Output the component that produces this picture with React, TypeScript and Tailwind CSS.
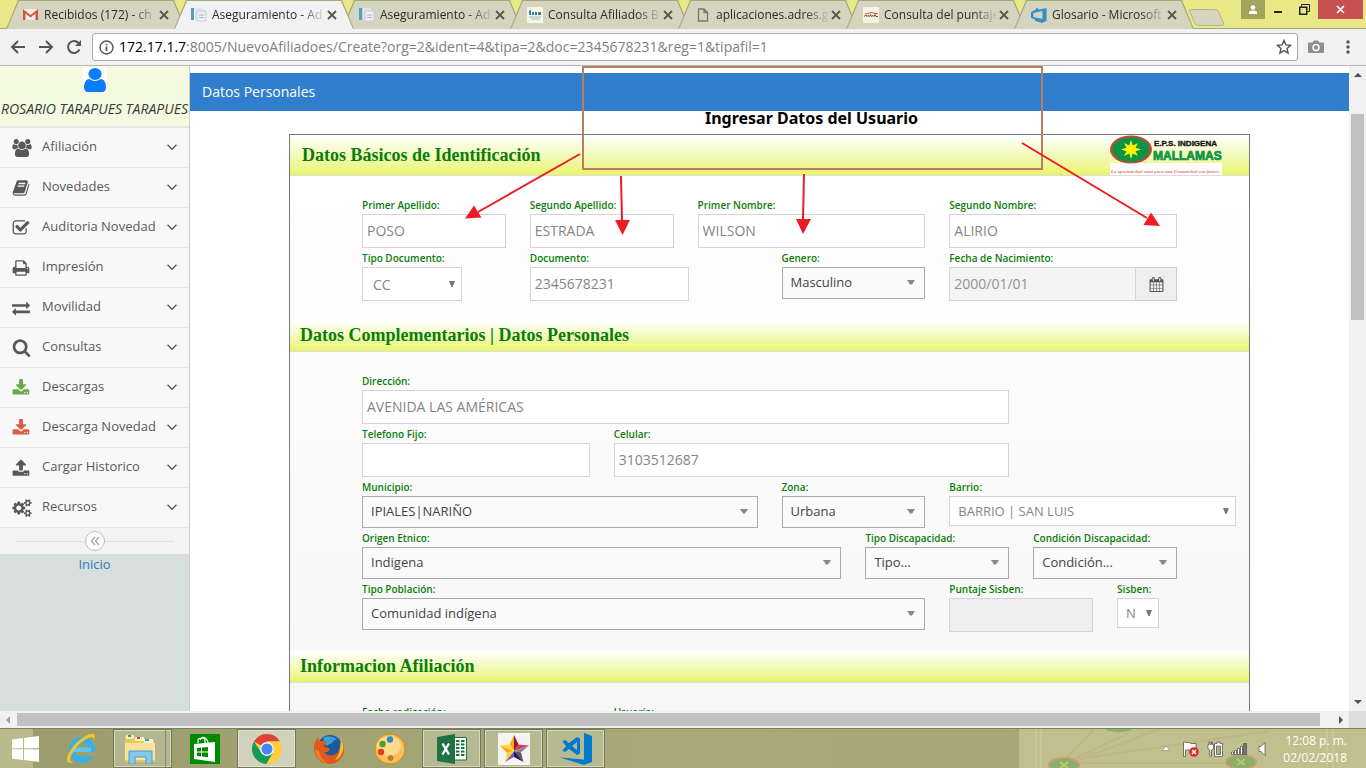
import type { ReactNode } from "react";

const PATHS = {
  users:
    "M593 896q-162 5-265 128h-134q-82 0-138-40.5t-56-118.5q0-353 124-353 6 0 43.5 21t97.5 42.5 119 21.5q67 0 133-23-5 37-5 66 0 139 81 256zm1071 637q0 120-73 189.5t-194 69.5h-874q-121 0-194-69.5t-73-189.5q0-53 3.5-103.5t14-109 26.5-108.5 43-97.5 62-81 85.5-53.5 111.5-20q10 0 43 21.5t73 48 107 48 135 21.5 135-21.5 107-48 73-48 43-21.5q61 0 111.5 20t85.5 53.5 62 81 43 97.5 26.5 108.5 14 109 3.5 103.5zm-1024-1277q0 106-75 181t-181 75-181-75-75-181 75-181 181-75 181 75 75 181zm704 384q0 159-112.5 271.5t-271.5 112.5-271.5-112.5-112.5-271.5 112.5-271.5 271.5-112.5 271.5 112.5 112.5 271.5zm576 225q0 78-56 118.5t-138 40.5h-134q-103-123-265-128 81-117 81-256 0-29-5-66 66 23 133 23 59 0 119-21.5t97.5-42.5 43.5-21q124 0 124 353zm-128-609q0 106-75 181t-181 75-181-75-75-181 75-181 181-75 181 75 75 181z",
  book:
    "M1703 478q40 57 18 129l-275 906q-19 64-76.5 107.5t-122.5 43.5h-923q-77 0-148.5-53.5t-99.5-131.5q-24-67-2-127 0-4 3-27t4-37q1-8-3-21.5t-3-19.5q2-11 8-21t16.5-23.5 16.5-23.5q23-38 45-91.5t30-91.5q3-10 .5-30t-.5-28q3-11 17-28t17-23q21-36 42-92t25-90q1-9-2.5-32t.5-28q4-13 22-30.5t22-22.5q19-26 42.5-84.5t27.5-96.5q1-8-3-25.5t-2-26.5q2-8 9-18t18-23 17-21q8-12 16.5-30.5t15-35 16-36 19.5-32 26.5-23.5 36-11.5 47.5 5.5l-1 3q38-9 51-9h761q74 0 114 56t18 130l-274 906q-36 119-71.5 153.5t-128.5 34.5h-869q-27 0-38 15-11 16-1 43 24 70 144 70h923q29 0 56-15.5t35-41.5l300-987q7-22 5-57 38 15 59 43zm-1064 2q-4 13 2 22.5t20 9.5h608q13 0 25.5-9.5t16.5-22.5l21-64q4-13-2-22.5t-20-9.5h-608q-13 0-25.5 9.5t-16.5 22.5zm-83 256q-4 13 2 22.5t20 9.5h608q13 0 25.5-9.5t16.5-22.5l21-64q4-13-2-22.5t-20-9.5h-608q-13 0-25.5 9.5t-16.5 22.5z",
  check:
    "M1472 930v318q0 119-84.5 203.5t-203.5 84.5h-832q-119 0-203.5-84.5t-84.5-203.5v-832q0-119 84.5-203.5t203.5-84.5h832q63 0 117 25 15 7 18 23 3 17-9 29l-49 49q-10 10-23 10-3 0-9-2-23-6-45-6h-832q-66 0-113 47t-47 113v832q0 66 47 113t113 47h832q66 0 113-47t47-113v-254q0-13 9-22l64-64q10-10 23-10 6 0 12 3 20 8 20 29zm231-489l-814 814q-24 24-57 24t-57-24l-430-430q-24-24-24-57t24-57l110-110q24-24 57-24t57 24l263 263 647-647q24-24 57-24t57 24l110 110q24 24 24 57t-24 57z",
  print:
    "M448 1536h896v-256h-896v256zm0-640h896v-384h-160q-40 0-68-28t-28-68v-160h-640v640zm1152 64q0-26-19-45t-45-19-45 19-19 45 19 45 45 19 45-19 19-45zm128 0v416q0 13-9.5 22.5t-22.5 9.5h-224v160q0 40-28 68t-68 28h-960q-40 0-68-28t-28-68v-160h-224q-13 0-22.5-9.5t-9.5-22.5v-416q0-79 56.5-135.5t135.5-56.5h64v-544q0-40 28-68t68-28h672q40 0 88 20t76 48l152 152q28 28 48 76t20 88v256h64q79 0 135.5 56.5t56.5 135.5z",
  exchange:
    "M1792 1184v192q0 13-9.5 22.5t-22.5 9.5h-1376v192q0 13-9.5 22.5t-22.5 9.5q-12 0-24-10l-319-320q-9-9-9-22 0-14 9-23l320-320q9-9 23-9 13 0 22.5 9.5t9.5 22.5v192h1376q13 0 22.5 9.5t9.5 22.5zm0-544q0 14-9 23l-320 320q-9 9-23 9-13 0-22.5-9.5t-9.5-22.5v-192h-1376q-13 0-22.5-9.5t-9.5-22.5v-192q0-13 9.5-22.5t22.5-9.5h1376v-192q0-14 9-23t23-9q12 0 24 10l319 319q9 9 9 23z",
  search:
    "M1216 832q0-185-131.5-316.5t-316.5-131.5-316.5 131.5-131.5 316.5 131.5 316.5 316.5 131.5 316.5-131.5 131.5-316.5zm512 832q0 52-38 90t-90 38q-54 0-90-38l-343-342q-179 124-399 124-143 0-273.5-55.5t-225-150-150-225-55.5-273.5 55.5-273.5 150-225 225-150 273.5-55.5 273.5 55.5 225 150 150 225 55.5 273.5q0 220-124 399l343 343q37 37 37 90z",
  download:
    "M1344 1344q0-26-19-45t-45-19-45 19-19 45 19 45 45 19 45-19 19-45zm256 0q0-26-19-45t-45-19-45 19-19 45 19 45 45 19 45-19 19-45zm128-224v320q0 40-28 68t-68 28h-1472q-40 0-68-28t-28-68v-320q0-40 28-68t68-28h465l135 136q58 56 136 56t136-56l136-136h464q40 0 68 28t28 68zm-325-569q17 41-14 70l-448 448q-18 19-45 19t-45-19l-448-448q-31-29-14-70 17-39 59-39h256v-448q0-26 19-45t45-19h256q26 0 45 19t19 45v448h256q42 0 59 39z",
  upload:
    "M1344 1472q0-26-19-45t-45-19-45 19-19 45 19 45 45 19 45-19 19-45zm256 0q0-26-19-45t-45-19-45 19-19 45 19 45 45 19 45-19 19-45zm128-224v320q0 40-28 68t-68 28h-1472q-40 0-68-28t-28-68v-320q0-40 28-68t68-28h427q21 56 70.5 92t110.5 36h256q61 0 110.5-36t70.5-92h427q40 0 68 28t28 68zm-325-648q-17 40-59 40h-256v448q0 26-19 45t-45 19h-256q-26 0-45-19t-19-45v-448h-256q-42 0-59-40-17-39 14-69l448-448q18-19 45-19t45 19l448 448q31 30 14 69z",
  cogs:
    "M896 896q0-106-75-181t-181-75-181 75-75 181 75 181 181 75 181-75 75-181zm768 512q0-52-38-90t-90-38-90 38-38 90q0 53 37.5 90.5t90.5 37.5 90.5-37.5 37.5-90.5zm0-1024q0-52-38-90t-90-38-90 38-38 90q0 53 37.5 90.5t90.5 37.5 90.5-37.5 37.5-90.5zm-384 421v185q0 10-7 19.5t-16 10.5l-155 24q-11 35-32 76 34 48 90 115 7 11 7 20 0 12-7 19-23 30-82.5 89.5t-78.5 59.5q-11 0-21-7l-115-90q-37 19-77 31-11 108-23 155-7 24-30 24h-186q-11 0-20-7.5t-10-17.500l-23-153q-34-10-75-31l-118 89q-7 7-20 7-11 0-21-8-144-133-144-160 0-9 7-19 10-14 41-53t47-61q-23-44-35-82l-152-24q-10-1-17-9.5t-7-19.5v-185q0-10 7-19.5t16-10.5l155-24q11-35 32-76-34-48-90-115-7-11-7-20 0-12 7-20 22-30 82-89t79-59q11 0 21 7l115 90q34-18 77-32 11-108 23-154 7-24 30-24h186q11 0 20 7.5t10 17.5l23 153q34 10 75 31l118-89q8-7 20-7 11 0 21 8 144 133 144 160 0 9-7 19-12 16-42 54t-45 60q23 48 34 82l152 23q10 2 17 10.5t7 19.5zm640 533v140q0 16-149 31-12 27-30 52 51 113 51 138 0 4-4 7-122 71-124 71-8 0-46-47t-52-68q-20 2-30 2t-30-2q-14 21-52 68t-46 47q-2 0-124-71-4-3-4-7 0-25 51-138-18-25-30-52-149-15-149-31v-140q0-16 149-31 13-29 30-52-51-113-51-138 0-4 4-7 4-2 35-20t59-34 30-16q8 0 46 46.5t52 67.5q20-2 30-2t30 2q51-71 92-112l6-2q4 0 124 70 4 3 4 7 0 25-51 138 17 23 30 52 149 15 149 31zm0-1024v140q0 16-149 31-12 27-30 52 51 113 51 138 0 4-4 7-122 71-124 71-8 0-46-47t-52-68q-20 2-30 2t-30-2q-14 21-52 68t-46 47q-2 0-124-71-4-3-4-7 0-25 51-138-18-25-30-52-149-15-149-31v-140q0-16 149-31 13-29 30-52-51-113-51-138 0-4 4-7 4-2 35-20t59-34 30-16q8 0 46 46.5t52 67.5q20-2 30-2t30 2q51-71 92-112l6-2q4 0 124 70 4 3 4 7 0 25-51 138 17 23 30 52 149 15 149 31z",
  user:
    "M1536 1399q0 109-62.5 187t-150.5 78h-854q-88 0-150.5-78t-62.5-187q0-85 8.5-160.5t31.5-152 58.5-131 94-89 134.5-34.5q131 128 313 128t313-128q76 0 134.5 34.5t94 89 58.5 131 31.5 152 8.5 160.5zm-256-887q0 159-112.5 271.5t-271.5 112.5-271.5-112.5-112.5-271.5 112.5-271.5 271.5-112.5 271.5 112.5 112.5 271.5z",
  calendar:
    "M192 1664h288v-288h-288v288zm352 0h320v-288h-320v288zm-352-352h288v-320h-288v320zm352 0h320v-320h-320v320zm-352-384h288v-288h-288v288zm736 736h320v-288h-320v288zm-384-736h320v-288h-320v288zm768 736h288v-288h-288v288zm-384-352h320v-320h-320v320zm-352-864v-288q0-13-9.5-22.5t-22.5-9.5h-64q-13 0-22.5 9.5t-9.5 22.5v288q0 13 9.5 22.5t22.5 9.5h64q13 0 22.5-9.5t9.5-22.5zm736 864h288v-320h-288v320zm-384-384h320v-288h-320v288zm384 0h288v-288h-288v288zm32-480v-288q0-13-9.5-22.5t-22.5-9.5h-64q-13 0-22.5 9.5t-9.5 22.5v288q0 13 9.5 22.5t22.5 9.5h64q13 0 22.5-9.5t9.5-22.5zm384-64v1280q0 52-38 90t-90 38h-1408q-52 0-90-38t-38-90v-1280q0-52 38-90t90-38h128v-96q0-66 47-113t113-47h64q66 0 113 47t47 113v96h384v-96q0-66 47-113t113-47h64q66 0 113 47t47 113v96h128q52 0 90 38t38 90z",
};

function Glyph({ name, className, wide }: { name: keyof typeof PATHS; className: string; wide?: boolean }) {
  return (
    <svg viewBox={wide ? "0 0 1920 1792" : "0 0 1792 1792"} className={className} fill="currentColor" aria-hidden="true">
      <path d={PATHS[name]} />
    </svg>
  );
}

/* ---------- Browser chrome ---------- */

function MailIcon() {
  return (
    <svg viewBox="0 0 15 13" className="h-[13px] w-[15px]">
      <path d="M0 1h15v11H0z" fill="#f2ece8" />
      <path d="M0 12V1l7.500 6L15 1v11h-2.500V5.500L7.500 9.500l-5-4V12z" fill="#d4553f" />
    </svg>
  );
}

function SheetsIcon() {
  return (
    <svg viewBox="0 0 16 16" className="size-4">
      <path d="M0 1h3v12H0z" fill="#4f9fc0" />
      <path d="M4 1h7l2 2v10H4z" fill="#dfe5ea" />
      <path d="M6 4h9v10H6z" fill="#eceff2" stroke="#c0c9d2" strokeWidth=".8" />
      <path d="M8 8h5M8 10.500h5" stroke="#aeb9c4" />
    </svg>
  );
}

function AdresIcon() {
  return (
    <svg viewBox="0 0 16 16" className="size-4">
      <path d="M0 0h16v16H0z" fill="#f7f5e6" />
      <path d="M2 8V4l2-1.500V8zM5 8V5h2v3zM8 8V5h2v3zM11 8V5h3v3z" fill="#2e84a8" />
      <path d="M2 10h12M4 12h9" stroke="#8fa9b3" strokeWidth=".8" />
    </svg>
  );
}

function PageIcon() {
  return (
    <svg viewBox="0 0 16 16" className="size-4" fill="none" stroke="#75756a" strokeWidth="1.300">
      <path d="M3.500 2h5.500l3.500 3.500V14h-9zM9 2v3.500h3.500" />
    </svg>
  );
}

function SisbenIcon() {
  return (
    <svg viewBox="0 0 16 16" className="size-4">
      <path d="M0 0h16v16H0z" fill="#f7f3e4" />
      <path d="M2 7q6-3 13 0" stroke="#d9523c" fill="none" />
      <path d="M1 9.500l2-1.500 1 1.500 1-1 1.500 1 1-2 1 2 1.500-1 1 1 1-2 1 2h2" stroke="#4a3c36" strokeWidth=".9" fill="none" />
    </svg>
  );
}

function AzureIcon() {
  return (
    <svg viewBox="0 0 16 16" className="size-4" fill="#2f8fca">
      <path fillRule="evenodd" d="M0 5l5-2.500V.5L8 2.500l7.500-1.500v13L11 16l-6-2H4v-1.500L0 11zM2.500 6v4l9 2V4z" />
    </svg>
  );
}

const tabs: { title: string; icon: ReactNode; active?: boolean }[] = [
  { title: "Recibidos (172) - ch", icon: <MailIcon /> },
  { title: "Aseguramiento - Ad", icon: <SheetsIcon />, active: true },
  { title: "Aseguramiento - Ad", icon: <SheetsIcon /> },
  { title: "Consulta Afiliados B", icon: <AdresIcon /> },
  { title: "aplicaciones.adres.g", icon: <PageIcon /> },
  { title: "Consulta del puntaje", icon: <SisbenIcon /> },
  { title: "Glosario - Microsoft", icon: <AzureIcon /> },
];

function TabStrip() {
  return (
    <div className="flex h-7 shrink-0 bg-[#e8e886] pl-[6px]">
      <div role="tablist" className="flex min-w-0">
        {tabs.map((t, i) => (
          <div key={i} role="tab" aria-selected={!!t.active} className={`relative flex h-[29px] w-[180px] -mr-3 items-center ${t.active ? "z-10" : ""}`}>
            <span className="absolute inset-0 bg-[#a5a57e] [clip-path:polygon(0_100%,12px_0,calc(100%-12px)_0,100%_100%)]" />
            <span
              className={`absolute inset-0 [clip-path:polygon(1px_100%,13px_1px,calc(100%-13px)_1px,calc(100%-1px)_100%)] ${
                t.active ? "bg-[#f2f2f2]" : "bg-[#d5d5bf]"
              }`}
            />
            <span className="relative ml-4 flex w-[17px] justify-center">{t.icon}</span>
            <span className="relative ml-[5px] w-[114px] whitespace-nowrap text-xs text-[#2b2b26] [mask-image:linear-gradient(to_right,#000_78%,transparent)]">
              {t.title}
            </span>
            <button aria-label="Cerrar" className="relative ml-px">
              <svg viewBox="0 0 10 10" className="size-[10px]" stroke="#55554d" strokeWidth="1.800">
                <path d="M1 1l8 8M9 1l-8 8" />
              </svg>
            </button>
          </div>
        ))}
      </div>
      <button aria-label="Nueva pestaña" className="ml-[7px] mt-[7px]">
        <svg viewBox="0 0 36 17" className="h-[17px] w-9">
          <path d="M2 .5h24.500q2 0 3 2l5 11.500q1 2.500-1 2.500H9q-2 0-3-2L1 3Q0 .5 2 .5z" fill="#d5d5bf" stroke="#b4b48a" />
        </svg>
      </button>
      <div className="ml-auto flex items-start pr-[3px]">
        <button aria-label="Perfil" className="flex h-[19px] w-6 items-center justify-center bg-[#a3a35c]">
          <svg viewBox="0 0 10 10" className="size-[10px]" fill="#fff">
            <circle cx="5" cy="2.500" r="2.300" />
            <path d="M1 9V7.500Q1 5.600 5 5.600T9 7.500V9z" />
          </svg>
        </button>
        <button aria-label="Minimizar" className="flex h-[19px] w-[26px] items-end justify-center pb-[6px]">
          <svg viewBox="0 0 8 2" className="h-[2px] w-2" fill="#222">
            <path d="M0 0h8v2H0z" />
          </svg>
        </button>
        <button aria-label="Restaurar" className="flex h-[19px] w-[27px] items-center justify-center">
          <svg viewBox="0 0 11 11" className="size-[11px]" fill="none" stroke="#222">
            <path d="M2.500 2.500v-2h8v7h-2" />
            <path d="M.75 3.250h7v7h-7z" strokeWidth="1.500" />
          </svg>
        </button>
        <button aria-label="Cerrar ventana" className="flex h-[19px] w-[45px] items-center justify-center bg-[#c75050]">
          <svg viewBox="0 0 9 9" className="size-[9px]" stroke="#fff" strokeWidth="1.700">
            <path d="M1 1l7 7M8 1L1 8" />
          </svg>
        </button>
      </div>
    </div>
  );
}

function Toolbar() {
  return (
    <div className="flex h-[38px] shrink-0 items-center border-b border-t border-b-[#b6b4b6] border-t-[#a5a57e] bg-[#f2f2f2] pl-[10px] pr-4">
      <button aria-label="Atrás" className="mr-[12px]">
        <svg viewBox="0 0 16 16" className="size-4" fill="none" stroke="#555" strokeWidth="2">
          <path d="M15 8H2.500M8 2L2 8l6 6" />
        </svg>
      </button>
      <button aria-label="Adelante" className="mr-[12px]">
        <svg viewBox="0 0 16 16" className="size-4" fill="none" stroke="#555" strokeWidth="2">
          <path d="M1 8h12.500M8 2l6 6-6 6" />
        </svg>
      </button>
      <button aria-label="Recargar" className="mr-[10px]">
        <svg viewBox="0 0 16 16" className="size-4">
          <path d="M13.500 10.500A6 6 0 1 1 12.500 4" fill="none" stroke="#555" strokeWidth="2" />
          <path d="M15 1v6H9z" fill="#555" />
        </svg>
      </button>
      <div className="flex h-7 min-w-0 flex-1 items-center rounded-[3px] border border-[#a9a9a9] bg-white pl-[6px] pr-[5px]">
        <svg viewBox="0 0 15 15" className="size-[15px] shrink-0" fill="none" stroke="#555" strokeWidth="1.400">
          <circle cx="7.500" cy="7.500" r="6.500" />
          <path d="M7.500 6.500v4.500M7.500 3.700v1.500" strokeWidth="1.700" />
        </svg>
        <p className="ml-[5px] flex-1 truncate text-sm text-[#808080]">
          <span className="text-black">172.17.1.7</span>:8005/NuevoAfiliadoes/Create?org=2&amp;ident=4&amp;tipa=2&amp;doc=2345678231&amp;reg=1&amp;tipafil=1
        </p>
        <svg viewBox="0 0 16 16" className="size-4 shrink-0" fill="none" stroke="#555" strokeWidth="1.400">
          <path d="M8 1.500l1.900 4.400 4.700.4-3.600 3.100 1.100 4.700L8 11.600l-4.100 2.500L5 9.400 1.400 6.300l4.700-.4z" />
        </svg>
      </div>
      <button aria-label="Captura" className="ml-[10px]">
        <svg viewBox="0 0 16 14" className="h-[14px] w-4">
          <path d="M1 2.500h3.500L6 .5h4l1.500 2H15q1 0 1 1V12q0 1-1 1H1q-1 0-1-1V3.500q0-1 1-1z" fill="#8f8f8f" />
          <circle cx="8" cy="7.500" r="3" fill="#8f8f8f" stroke="#fff" strokeWidth="1.500" />
        </svg>
      </button>
      <button aria-label="Menú" className="ml-[22px]">
        <svg viewBox="0 0 4 14" className="h-[14px] w-1" fill="#555">
          <circle cx="2" cy="2" r="1.700" />
          <circle cx="2" cy="7" r="1.700" />
          <circle cx="2" cy="12" r="1.700" />
        </svg>
      </button>
    </div>
  );
}

/* ---------- Sidebar ---------- */

const menu: { label: string; icon: ReactNode }[] = [
  { label: "Afiliación", icon: <Glyph name="users" wide className="h-[18px] w-5" /> },
  { label: "Novedades", icon: <Glyph name="book" className="size-[18px]" /> },
  { label: "Auditoria Novedad", icon: <Glyph name="check" className="size-[18px]" /> },
  { label: "Impresión", icon: <Glyph name="print" className="size-[18px]" /> },
  { label: "Movilidad", icon: <Glyph name="exchange" className="size-[18px]" /> },
  { label: "Consultas", icon: <Glyph name="search" className="size-[19px]" /> },
  { label: "Descargas", icon: <Glyph name="download" className="size-[18px] text-[#69aa46]" /> },
  { label: "Descarga Novedad", icon: <Glyph name="download" className="size-[18px] text-[#dd5a43]" /> },
  { label: "Cargar Historico", icon: <Glyph name="upload" className="size-[18px]" /> },
  { label: "Recursos", icon: <Glyph name="cogs" wide className="h-[18px] w-5" /> },
];

function Sidebar() {
  return (
    <aside className="flex w-[190px] shrink-0 flex-col border-r border-[#ccc] bg-[#d6dfdc]">
      <div className="flex h-[62px] flex-col items-center border-b-2 border-[#e5e5e5] bg-[#f3fadf]">
        <div className="mt-px flex h-[25px] w-6 items-center justify-center bg-white">
          <svg viewBox="256 128 1280 1536" preserveAspectRatio="none" className="h-6 w-[22px]" fill="#0a7cff">
            <path d={PATHS.user} />
          </svg>
        </div>
        <p className="mt-[7px] whitespace-nowrap text-sm italic leading-5 text-[#393939]">ROSARIO TARAPUES TARAPUES</p>
      </div>
      <nav>
        <ul>
          {menu.map((m) => (
            <li key={m.label} className="border-b border-[#e5e5e5] bg-[#f8f8f8]">
              <a href="#" className="flex h-[39px] items-center pl-3 pr-3 text-[#585858]">
                <span className="flex w-[30px] shrink-0">{m.icon}</span>
                <span className="flex-1 whitespace-nowrap pb-[2px] text-[13px]">{m.label}</span>
                <svg viewBox="0 0 10 8" className="h-2 w-[10px]" fill="none" stroke="#585858" strokeWidth="1.400">
                  <path d="M.5.7L5 5.200 9.500.7" />
                </svg>
              </a>
            </li>
          ))}
        </ul>
      </nav>
      <div className="flex h-[26px] items-center bg-[#f3f3f3] px-[15px]">
        <span className="h-px flex-1 bg-[#e0e0e0]" />
        <button aria-label="Contraer menú" className="flex size-5 items-center justify-center rounded-full border border-[#bbb] bg-white">
          <svg viewBox="0 0 10 10" className="size-[10px]" fill="none" stroke="#aaa" strokeWidth="1.400">
            <path d="M5 1L1.500 5 5 9M9 1L5.500 5 9 9" />
          </svg>
        </button>
        <span className="h-px flex-1 bg-[#e0e0e0]" />
      </div>
      <a href="#" className="text-center text-[13px] leading-5 text-[#337ab7]">
        Inicio
      </a>
    </aside>
  );
}

/* ---------- Form ---------- */

function Field({ id, label, className, children }: { id: string; label: string; className: string; children: ReactNode }) {
  return (
    <div className={className}>
      <label htmlFor={id} className="block h-[19px] whitespace-nowrap text-[10px] font-semibold leading-5 text-[#0a7d0a]">
        {label}
      </label>
      {children}
    </div>
  );
}

function TextField({ id, label, value, className, inputClass = "w-full" }: { id: string; label: string; value: string; className: string; inputClass?: string }) {
  return (
    <Field id={id} label={label} className={className}>
      <input id={id} defaultValue={value} className={`block h-[34px] border border-[#d5d5d5] bg-white px-1 pb-[2px] text-sm text-[#858585] ${inputClass}`} />
    </Field>
  );
}

function ChosenSelect({ id, label, value, className }: { id: string; label: string; value: string; className: string }) {
  return (
    <Field id={id} label={label} className={className}>
      <div className="relative">
        <select id={id} className="block h-8 w-full appearance-none border border-[#aaa] bg-[#fafafa] pl-2 pr-6 text-[13px] text-[#444]">
          <option>{value}</option>
        </select>
        <svg viewBox="0 0 8 5" className="pointer-events-none absolute right-[10px] top-[13px] h-[5px] w-2" fill="#888">
          <path d="M0 0h8L5 4.500H3z" />
        </svg>
      </div>
    </Field>
  );
}

function PlainSelect({ id, label, value, className, boxClass, selectClass }: { id: string; label: string; value: string; className: string; boxClass: string; selectClass: string }) {
  return (
    <Field id={id} label={label} className={className}>
      <div className={`relative ${boxClass}`}>
        <select id={id} className={`block w-full appearance-none border border-[#d5d5d5] bg-white pt-[2px] text-[#858585] ${selectClass}`}>
          <option>{value}</option>
        </select>
        <svg viewBox="0 0 6 7" className="pointer-events-none absolute inset-y-0 right-[7px] my-auto h-[7px] w-[6px]" fill="#777">
          <path d="M0 0h6L3.600 6H2.400z" />
        </svg>
      </div>
    </Field>
  );
}

function SectionTitle({ children }: { children: ReactNode }) {
  return (
    <h3 className="flex h-8 items-center border-b border-[#ddd] bg-linear-to-b from-white to-[#e9f46a] px-[10px] pb-[2px] font-['Liberation_Serif',serif] text-lg font-bold text-[#0a7d0a]">
      {children}
    </h3>
  );
}

function BrandLogo() {
  return (
    <svg viewBox="0 0 112 40" className="h-10 w-28 shrink-0">
      <path d="M0 28h112v12H0z" fill="#fff" />
      <ellipse cx="21" cy="14.500" rx="21" ry="14" fill="#c8463a" />
      <ellipse cx="21" cy="14.500" rx="18.500" ry="12.300" fill="#0b9444" />
      <path d="M21 5l1.800 5.500L28 8l-2.500 4.800L31 14.500l-5.500 1.700L28 21l-5.200-2.500L21 24l-1.800-5.500L14 21l2.500-4.800L11 14.500l5.500-1.700L14 8l5.200 2.500z" fill="#fff200" />
      <text x="44" y="11" fontFamily="'Liberation Sans',sans-serif" fontWeight="bold" fontSize="8" fill="#1a1a1a" stroke="#1a1a1a" strokeWidth=".4">
        E.P.S. INDIGENA
      </text>
      <text x="43" y="25" fontFamily="'Liberation Sans',sans-serif" fontWeight="bold" fontSize="12" fill="#0b9444" stroke="#0b9444" strokeWidth=".7">
        MALLAMAS
      </text>
      <text x="1" y="38" fontFamily="'Liberation Serif',serif" fontStyle="italic" fontSize="5" fill="#d0342c">
        La oportunidad sana para una Comunidad con futuro
      </text>
    </svg>
  );
}

const GRID = "grid grid-cols-10 gap-x-6 px-[72px] pt-[19px] pb-[19px]";

function Form() {
  return (
    <form className="border border-[#777] bg-linear-to-b from-white to-[#f6f6f6]">
      <div className="flex h-[41px] items-center justify-between border-b border-[#ddd] bg-linear-to-b from-white to-[#e9f46a] pl-3 pr-[27px]">
        <h3 className="font-['Liberation_Serif',serif] text-lg font-bold text-[#0a7d0a]">Datos Básicos de Identificación</h3>
        <BrandLogo />
      </div>
      <div className={GRID}>
        <TextField id="ape1" label="Primer Apellido:" value="POSO" className="col-span-2" />
        <TextField id="ape2" label="Segundo Apellido:" value="ESTRADA" className="col-span-2" />
        <TextField id="nom1" label="Primer Nombre:" value="WILSON" className="col-span-3" />
        <TextField id="nom2" label="Segundo Nombre:" value="ALIRIO" className="col-span-3" />
        <PlainSelect id="tdoc" label="Tipo Documento:" value="CC" className="col-span-2" boxClass="w-[100px]" selectClass="h-[34px] pl-[10px] text-sm" />
        <TextField id="doc" label="Documento:" value="2345678231" className="col-span-3" inputClass="w-[159px]" />
        <ChosenSelect id="gen" label="Genero:" value="Masculino" className="col-span-2" />
        <Field id="fnac" label="Fecha de Nacimiento:" className="col-span-3">
          <div className="flex">
            <input id="fnac" readOnly defaultValue="2000/01/01" className="h-[34px] min-w-0 flex-1 border border-[#d5d5d5] bg-[#f4f4f4] px-1 pb-[2px] text-sm text-[#939192]" />
            <button type="button" aria-label="Abrir calendario" className="flex w-[41px] items-center justify-center border border-l-0 border-[#ccc] bg-[#eee] text-[#555]">
              <Glyph name="calendar" className="size-[15px]" />
            </button>
          </div>
        </Field>
      </div>

      <SectionTitle>Datos Complementarios | Datos Personales</SectionTitle>
      <div className={GRID}>
        <TextField id="dir" label="Dirección:" value="AVENIDA LAS AMÉRICAS" className="col-span-8" />
        <TextField id="tel" label="Telefono Fijo:" value="" className="col-span-3 col-start-1" />
        <TextField id="cel" label="Celular:" value="3103512687" className="col-span-5" />
        <ChosenSelect id="mun" label="Municipio:" value="IPIALES|NARIÑO" className="col-span-5 col-start-1" />
        <ChosenSelect id="zona" label="Zona:" value="Urbana" className="col-span-2" />
        <PlainSelect id="barrio" label="Barrio:" value="BARRIO | SAN LUIS" className="col-span-3" boxClass="w-[287px]" selectClass="h-[30px] pl-2 text-[13px]" />
        <ChosenSelect id="etnia" label="Origen Etnico:" value="Indigena" className="col-span-6" />
        <ChosenSelect id="tdis" label="Tipo Discapacidad:" value="Tipo..." className="col-span-2" />
        <ChosenSelect id="cdis" label="Condición Discapacidad:" value="Condición..." className="col-span-2" />
        <ChosenSelect id="tpob" label="Tipo Población:" value="Comunidad indígena" className="col-span-7" />
        <Field id="punt" label="Puntaje Sisben:" className="col-span-2">
          <input id="punt" disabled className="block h-[34px] w-full border border-[#d5d5d5] bg-[#eee] px-1 text-sm" />
        </Field>
        <PlainSelect id="sisben" label="Sisben:" value="N" className="col-span-1" boxClass="w-[42px]" selectClass="h-[30px] pl-2 text-[13px]" />
      </div>

      <SectionTitle>Informacion Afiliación</SectionTitle>
      <div className={GRID}>
        <TextField id="frad" label="Fecha radicación:" value="" className="col-span-3" />
        <TextField id="usr" label="Usuario:" value="" className="col-span-5" />
      </div>
    </form>
  );
}

function Annotations() {
  return (
    <svg viewBox="0 0 1159 645" className="pointer-events-none absolute left-0 top-0 h-[645px] w-[1159px]" aria-hidden="true">
      <path d="M393 1h459v102H393z" fill="none" stroke="#bb7c60" strokeWidth="2" />
      <g stroke="#ed1c24" strokeWidth="2">
        <path d="M390 88L288 146" />
        <path d="M431 110l1 45" />
        <path d="M614 108l-1 46" />
        <path d="M832 77l125 75" />
      </g>
      <g fill="#ed1c24">
        <path d="M275 152.500l9-13 7.500 12z" />
        <path d="M425 154h15l-7.500 15z" />
        <path d="M606 153h15l-8 15z" />
        <path d="M970 160l-16.500-1 7.500-12.500z" />
      </g>
    </svg>
  );
}

function VerticalScrollbar() {
  return (
    <div className="flex w-[17px] shrink-0 flex-col items-center bg-[#f1f1f1] py-[7px]">
      <svg viewBox="0 0 8 4" className="h-1 w-2" fill="#505050">
        <path d="M0 4l4-4 4 4z" />
      </svg>
      <div className="mt-[37px] h-[206px] w-[13px] bg-[#c1c1c1]" />
      <svg viewBox="0 0 8 4" className="mt-auto h-1 w-2" fill="#505050">
        <path d="M0 0h8L4 4z" />
      </svg>
    </div>
  );
}

function HorizontalScrollbar() {
  return (
    <div className="flex h-[17px] shrink-0 items-center bg-[#f1f1f1]">
      <svg viewBox="0 0 4 8" className="ml-[6px] mr-[7px] h-2 w-1" fill="#a3a3a3">
        <path d="M4 0v8L0 4z" />
      </svg>
      <div className="h-[13px] flex-1 bg-[#c1c1c1]" />
      <svg viewBox="0 0 4 8" className="ml-[19px] mr-[6px] h-2 w-1" fill="#505050">
        <path d="M0 0v8l4-4z" />
      </svg>
      <div className="h-full w-[17px] bg-[#dcdcdc]" />
    </div>
  );
}

/* ---------- Taskbar ---------- */

const framed = "border border-[#75785a] bg-[#c3c6a3]/60 shadow-[inset_0_0_0_1px_rgba(235,236,215,0.6)]";

function Taskbar() {
  return (
    <footer className="flex h-10 shrink-0 border-t border-[#7d7f58] bg-linear-to-r from-[#9a9c6e] via-[#a8aa78] to-[#a3a672]">
      <button aria-label="Inicio" className="flex w-[49px] items-center bg-[linear-gradient(to_right,#b9ba8c_33px,transparent_33px)] pl-3">
        <svg viewBox="0 0 27 26" className="h-[26px] w-[27px]" fill="#fff">
          <path d="M0 3.500L11 2v10.300H0zM12 1.900L27 0v12.300H12zM0 13.300h11V24L0 22.500zM12 13.300h15V26l-15-1.900z" />
        </svg>
      </button>
      <button aria-label="Internet Explorer" className="flex w-16 items-center justify-center">
        <svg viewBox="0 0 32 32" className="size-8">
          <circle cx="17" cy="17" r="10" fill="none" stroke="#35b1ea" strokeWidth="6" />
          <path d="M8 14.500h18v4.500H8z" fill="#5cc6f2" />
          <path d="M20 19h12v4.500H20z" fill="#9da071" />
          <path d="M6 30Q-1 30 4 20T19 4q10-6 11-1 0 2-1 4 0-4-6-2-8 4-13 11T5 27q0 2 4 1.500z" fill="#f7c526" />
        </svg>
      </button>
      <button aria-label="Explorador" className={`flex w-[59px] items-center pl-[10px] ${framed}`}>
        <svg viewBox="0 0 32 30" className="h-[30px] w-8">
          <path d="M1 2h9l1 2h8l1 2h9l2 3v19H1z" fill="#e7c85e" />
          <path d="M2 1h8v4H2z" fill="#f4e9b8" />
          <path d="M11 3h9v4h-9zM20 5h9v4h-9z" fill="#faf3d0" />
          <path d="M4 1h3v2H4z" fill="#39a845" />
          <path d="M13 3h3v2h-3z" fill="#d6402f" />
          <path d="M21 5h4v2h-4z" fill="#2f9ede" />
          <path d="M1 9h30v17H1z" fill="#f8e39a" />
          <path d="M5 30V17h23v13h-6v-7H11v7z" fill="#86c8e8" stroke="#4f9cc7" />
        </svg>
        <span className="ml-[9px] h-full w-px bg-[#85886a]" />
      </button>
      <button aria-label="Tienda" className="flex w-[65px] items-center justify-center">
        <svg viewBox="0 0 30 30" className="size-[30px]">
          <path d="M0 0h30v30H0z" fill="#008a00" />
          <path d="M4 10l21-2v20L4 25z" fill="#fff" />
          <path d="M8 9V7q0-3 3.500-3T15 7v2M10 6q2-4 5-2t3 5" fill="none" stroke="#fff" strokeWidth="1.200" />
          <path d="M7 14l4-.4v4H7zM12 13.500l6-.6v4.700h-6zM7 18.500h4v4L7 22zM12 18.500h6v4.800l-6-.7z" fill="#008a00" />
        </svg>
      </button>
      <button aria-label="Chrome" className={`flex w-[59px] items-center justify-center bg-[#d0d2bd]! ${framed}`}>
        <svg viewBox="0 0 30 30" className="size-[30px]">
          <circle cx="15" cy="15" r="15" fill="#ffcd40" />
          <path d="M15 15L2 7.500A15 15 0 0 1 28 7.500H15z" fill="#db4437" />
          <path d="M2 7.500A15 15 0 0 0 14.500 30L21 19 9 18z" fill="#0f9d58" />
          <path d="M15 7.500h13A15 15 0 0 1 14.500 30L21.500 18z" fill="#ffcd40" />
          <circle cx="15" cy="15" r="7" fill="#f1f1f1" />
          <circle cx="15" cy="15" r="5.500" fill="#4285f4" />
        </svg>
      </button>
      <button aria-label="Firefox" className="flex w-[65px] items-center justify-center">
        <svg viewBox="0 0 30 30" className="size-[30px]">
          <circle cx="16" cy="13.500" r="12.500" fill="#1c5a9e" />
          <path d="M9 4q7-4 14 1-4 1-5 4l-6 3z" fill="#3ea0d8" />
          <path d="M28 7q4 8 1 14-4 9-14 9T1 20Q-2 10 4 3q0 3 2 4 4-1 7 1-3 2-3 5 4 0 6 2-2 4-6 3 3 4 9 3t7-8q2-3 2-6z" fill="#e2591b" />
          <path d="M27 5q5 9 0 16-2 4-6 5 5-6 5-12z" fill="#f9c22c" />
          <path d="M1 15q1 12 13 15Q6 25 5 17z" fill="#f58220" />
        </svg>
      </button>
      <button aria-label="Paint" className="mr-1 flex w-[57px] items-center justify-center">
        <svg viewBox="0 0 32 32" className="size-8">
          <circle cx="16" cy="16" r="15" fill="#fbbf57" stroke="#d98a1d" />
          <ellipse cx="15" cy="13" rx="12" ry="10" fill="#ffd98c" />
          <circle cx="16" cy="6.500" r="3.200" fill="#2b8fc4" />
          <circle cx="8.500" cy="11" r="3.200" fill="#4a9e2b" />
          <circle cx="7" cy="19" r="3.200" fill="#e03c2e" />
          <circle cx="16.500" cy="25" r="2.500" fill="#9a8a55" stroke="#c07a1a" />
        </svg>
      </button>
      <div className="flex gap-[3px]">
        <button aria-label="Excel" className={`flex w-[59px] items-center justify-center ${framed}`}>
          <svg viewBox="0 0 30 30" className="size-[30px]">
            <path d="M16 3.500h13.500v22.500H16z" fill="#fff" stroke="#207245" />
            <path d="M19 7h3.500M24 7h3.500M19 10.500h3.500M24 10.500h3.500M19 14h3.500M24 14h3.500M19 17.500h3.500M24 17.500h3.500M19 21h3.500M24 21h3.500" stroke="#207245" strokeWidth="1.800" />
            <path d="M0 3l18-3v30L0 27z" fill="#207245" />
            <path d="M5.500 9.500l6.500 11M12 9.500l-6.500 11" stroke="#fff" strokeWidth="2.300" />
          </svg>
        </button>
        <button aria-label="StarUML" className={`flex w-[59px] items-center justify-center ${framed}`}>
          <svg viewBox="0 0 32 32" className="size-8">
            <path d="M0 0h32v32H0z" fill="#f6f4f3" />
            <path d="M16 2v16l-4.500-6.500z" fill="#f5b21b" />
            <path d="M16 2l4.500 9.500L16 18z" fill="#9c1330" />
            <path d="M20.500 11.500L31 12.500 16 18z" fill="#e0355c" />
            <path d="M31 12.500L23 19.500 16 18z" fill="#8d8d8d" />
            <path d="M23 19.500L25.500 29 16 18z" fill="#5a5a5a" />
            <path d="M25.500 29L16 24v-6z" fill="#2c1166" />
            <path d="M16 24L7 29l9-11z" fill="#8455c7" />
            <path d="M7 29l2-9.500 7-1.500z" fill="#fbd531" />
            <path d="M9 19.500L1.500 12.500 16 18z" fill="#f5a800" />
            <path d="M1.500 12.500l10-1L16 18z" fill="#ffd93b" />
          </svg>
        </button>
        <button aria-label="Visual Studio Code" className={`flex w-[59px] items-center justify-center ${framed}`}>
          <svg viewBox="0 0 32 32" className="size-8">
            <path d="M24 0l8 3v26l-8 3L0 24.500l24 2z" fill="#007acc" />
            <path fillRule="evenodd" d="M17 4l3 1.500v15L17 22l-8-6-4 3-2.500-1.500L6 13 2.500 8.500 5 7l4 3zM17 9l-5 4 5 4z" fill="#007acc" />
          </svg>
        </button>
      </div>
      <div className="relative ml-auto flex w-[347px] items-center justify-end overflow-hidden bg-[#bfc08d] pr-[19px] text-xs text-white">
        <svg viewBox="0 0 347 40" className="absolute inset-0 h-10 w-full" aria-hidden="true">
          <path d="M17 0v40M22 0v40M308 0v40M314 0v40" stroke="#ccc697" strokeWidth="2" />
          <path d="M45 32L75 0M52 34L140 0M60 30l190-28M62 34h150M55 30L110 4" stroke="#c2a873" strokeWidth="2" fill="none" opacity=".4" />
          <g opacity=".7">
            <ellipse cx="45" cy="36" rx="15" ry="7" fill="#73a860" stroke="#c99268" strokeWidth="2" />
            <ellipse cx="222" cy="33" rx="15" ry="7" fill="#73a860" stroke="#c99268" strokeWidth="2" />
            <ellipse cx="100" cy="0" rx="13" ry="3" fill="#73a860" />
          </g>
          <path d="M41 33l8 6M49 33l-8 6M218 30l8 6M226 30l-8 6" stroke="#c7d460" strokeWidth="2" opacity=".7" />
        </svg>
        <div className="relative flex items-center gap-2 pr-3">
          <svg viewBox="0 0 8 5" className="mr-[5px] h-[5px] w-2">
            <path d="M0 4.500L4 0l4 4.500z" fill="#fff" stroke="#666" strokeWidth=".5" />
          </svg>
          <svg viewBox="0 0 16 16" className="size-4">
            <path d="M.5 1v14.500h2V9H13V2.500H8L6 1.500H2.500V1z" fill="#fff" stroke="#555" strokeWidth=".8" />
            <circle cx="11" cy="11" r="4.800" fill="#d92b2b" />
            <path d="M9 9l4 4M13 9l-4 4" stroke="#fff" strokeWidth="1.400" />
          </svg>
          <svg viewBox="0 0 16 16" className="size-4" stroke="#555" strokeWidth=".8">
            <path d="M1 3.500h1V1h1v2.500h1.500V1h1v2.500h1V8L4.500 9v6H2.800V9L1 8z" fill="#fff" />
            <path d="M7.500 2.500H10V1h3v1.500h2.500v13h-8z" fill="#fff" />
            <path d="M9.500 5h4v8.500h-4z" fill="#aeb080" />
          </svg>
          <svg viewBox="0 0 16 12" className="h-3 w-4" fill="#fff" stroke="#555" strokeWidth=".8">
            <path d="M.5 9h2v2.500h-2zM3.500 7.500h2v4h-2zM6.500 5.500h2v6h-2zM9.500 3.500h2v8h-2z" />
            <path d="M12.500.5h3v11h-3z" fill="#777" />
          </svg>
          <svg viewBox="0 0 16 14" className="h-[14px] w-4" fill="#fff" stroke="#555" strokeWidth=".8">
            <path d="M4 4.500h2L10 .5v13l-4-4H4z" />
          </svg>
        </div>
        <div className="relative text-right leading-[17px]">
          <p>12:08 p. m.</p>
          <p>02/02/2018</p>
        </div>
      </div>
    </footer>
  );
}

export default function App() {
  return (
    <div className="flex h-screen flex-col overflow-hidden bg-white font-['Open_Sans',sans-serif]">
      <TabStrip />
      <Toolbar />
      <div className="flex min-h-0 flex-1">
        <Sidebar />
        <main className="relative min-w-0 flex-1 overflow-hidden bg-white pt-[7px]">
          <h1 className="flex h-[38px] items-center bg-[#307ecc] px-3 text-sm text-white">Datos Personales</h1>
          <div className="px-[99px]">
            <h2 className="h-[23px] whitespace-nowrap pl-[84px] text-center font-['Noto_Sans',sans-serif] text-base font-bold leading-[15px] text-black">
              Ingresar Datos del Usuario
            </h2>
            <Form />
          </div>
          <Annotations />
        </main>
        <VerticalScrollbar />
      </div>
      <HorizontalScrollbar />
      <Taskbar />
    </div>
  );
}
